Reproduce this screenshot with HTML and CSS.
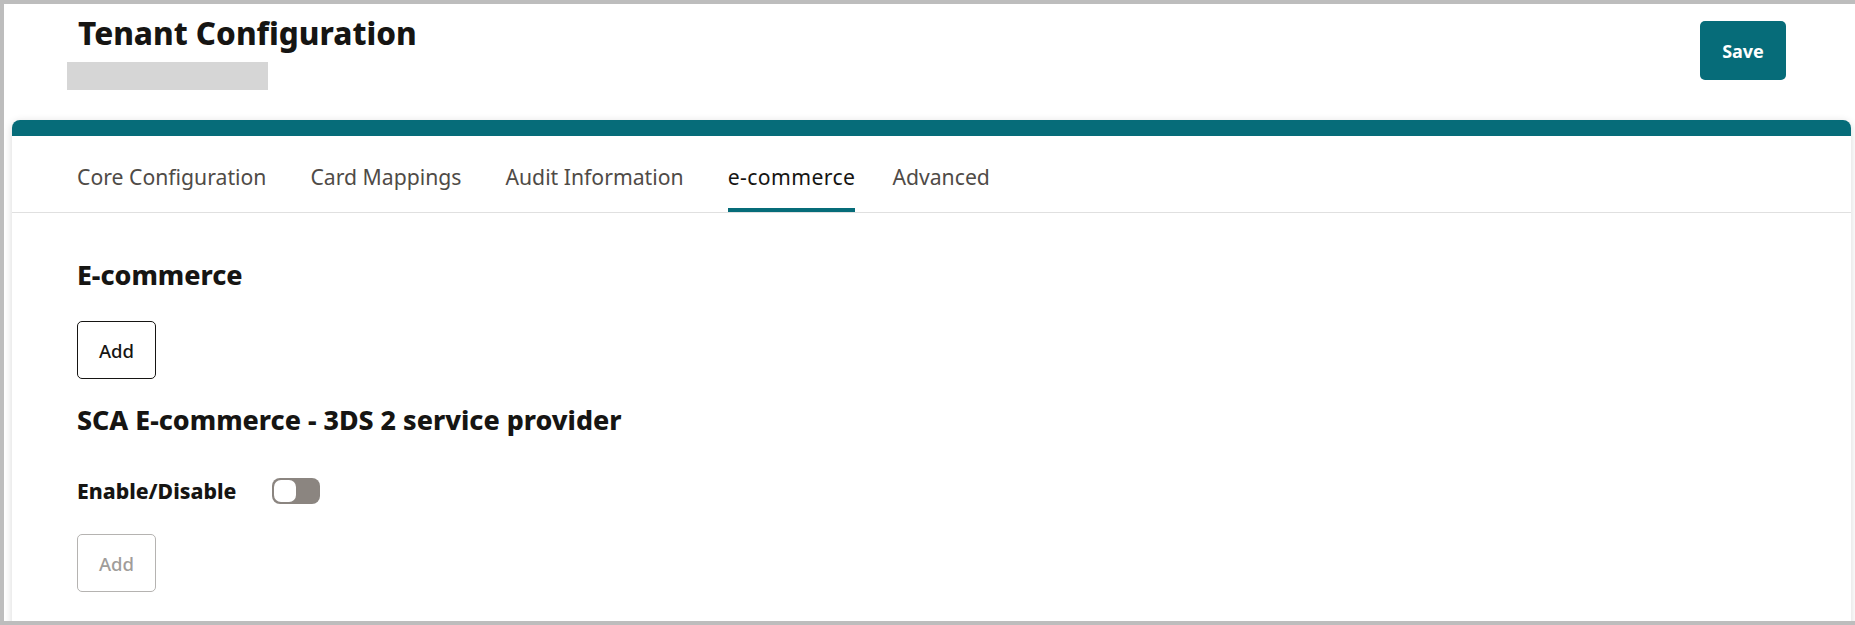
FILE: index.html
```html
<!DOCTYPE html>
<html lang="en">
<head>
<meta charset="utf-8">
<title>Tenant Configuration</title>
<link rel="stylesheet" href="styles.css">
</head>
<body>
<div class="frame">
  <header class="page-header">
    <div class="title-block">
      <h1 class="page-title">Tenant Configuration</h1>
      <div class="subtitle-placeholder"></div>
    </div>
    <button class="btn-primary" type="button">Save</button>
  </header>

  <section class="card">
    <div class="card-bar"></div>
    <nav class="tabs">
      <a class="tab">Core Configuration</a>
      <a class="tab">Card Mappings</a>
      <a class="tab">Audit Information</a>
      <a class="tab tab-active">e-commerce</a>
      <a class="tab tab-last">Advanced</a>
    </nav>
    <div class="card-body">
      <h2 class="section-title">E-commerce</h2>
      <button class="btn-outline" type="button">Add</button>
      <h2 class="section-title section-title-2">SCA E-commerce - 3DS 2 service provider</h2>
      <div class="switch-row">
        <span class="switch-label">Enable/Disable</span>
        <span class="switch"><span class="switch-knob"></span></span>
      </div>
      <button class="btn-outline btn-disabled" type="button" disabled>Add</button>
    </div>
  </section>
</div>
</body>
</html>
```

FILE: styles.css
```css
* { box-sizing: border-box; }
html, body { margin: 0; padding: 0; background: #ffffff; }
body { font-family: "Noto Sans", "Liberation Sans", sans-serif; color: #161513; }

.frame {
  width: 1855px;
  height: 625px;
  border-top: 4px solid #bdbdbd;
  border-left: 4px solid #bdbdbd;
  border-bottom: 4px solid #bdbdbd;
  overflow: hidden;
  background: #ffffff;
}

.page-header {
  display: flex;
  justify-content: space-between;
  align-items: flex-start;
  height: 116px;
  padding: 0 69px 0 63px;
}
.title-block { padding-top: 11px; }
.page-title {
  margin: 0;
  padding-left: 11px;
  font-size: 31.4px;
  line-height: 36px;
  font-weight: 800;
  color: #161513;
}
.subtitle-placeholder {
  width: 201px;
  height: 28px;
  margin-top: 11px;
  background: #d6d6d6;
}

.btn-primary {
  margin-top: 17px;
  width: 86px;
  height: 59px;
  border: none;
  border-radius: 5px;
  background: #066c79;
  color: #ffffff;
  font-family: inherit;
  font-size: 18px;
  font-weight: 700;
}

.card {
  margin: 0 4px 0 8px;
  background: #ffffff;
  box-shadow: 0 2px 8px rgba(0, 0, 0, 0.16);
  border-radius: 8px 8px 0 0;
  height: 520px;
}
.card-bar {
  height: 16px;
  background: #066c79;
  border-radius: 8px 8px 0 0;
}

.tabs {
  display: flex;
  gap: 44px;
  padding: 0 65px;
  border-bottom: 1px solid #e0e0e0;
}
.tab {
  display: block;
  height: 76px;
  padding-top: 27px;
  font-size: 21.2px;
  line-height: 28px;
  color: #4f4b47;
  border-bottom: 4px solid transparent;
}
.tab-active {
  color: #161513;
  border-bottom-color: #066c79;
  letter-spacing: 0.4px;
}
.tab-last { margin-left: -7px; }

.card-body {
  padding: 44px 65px 0 65px;
}
.section-title {
  margin: 0;
  font-size: 26.8px;
  line-height: 36px;
  font-weight: 800;
  color: #161513;
}
.section-title-2 { margin-top: 23px; }

.btn-outline {
  display: block;
  margin-top: 28px;
  width: 79px;
  height: 58px;
  border: 1px solid #161513;
  border-radius: 5px;
  background: #ffffff;
  color: #161513;
  font-family: inherit;
  font-size: 18.5px;
  font-weight: 500;
}
.btn-disabled {
  margin-top: 29px;
  border-color: #b5b3b1;
  color: #a09d9a;
}

.switch-row {
  display: flex;
  align-items: center;
  gap: 36px;
  margin-top: 39px;
  height: 28px;
}
.switch-label {
  font-size: 21.2px;
  line-height: 28px;
  font-weight: 800;
}
.switch {
  display: flex;
  align-items: center;
  width: 48px;
  height: 26px;
  padding: 2px;
  border-radius: 8px;
  background: #8b8580;
}
.switch-knob {
  width: 22px;
  height: 22px;
  border-radius: 7px;
  background: #ffffff;
}
```
